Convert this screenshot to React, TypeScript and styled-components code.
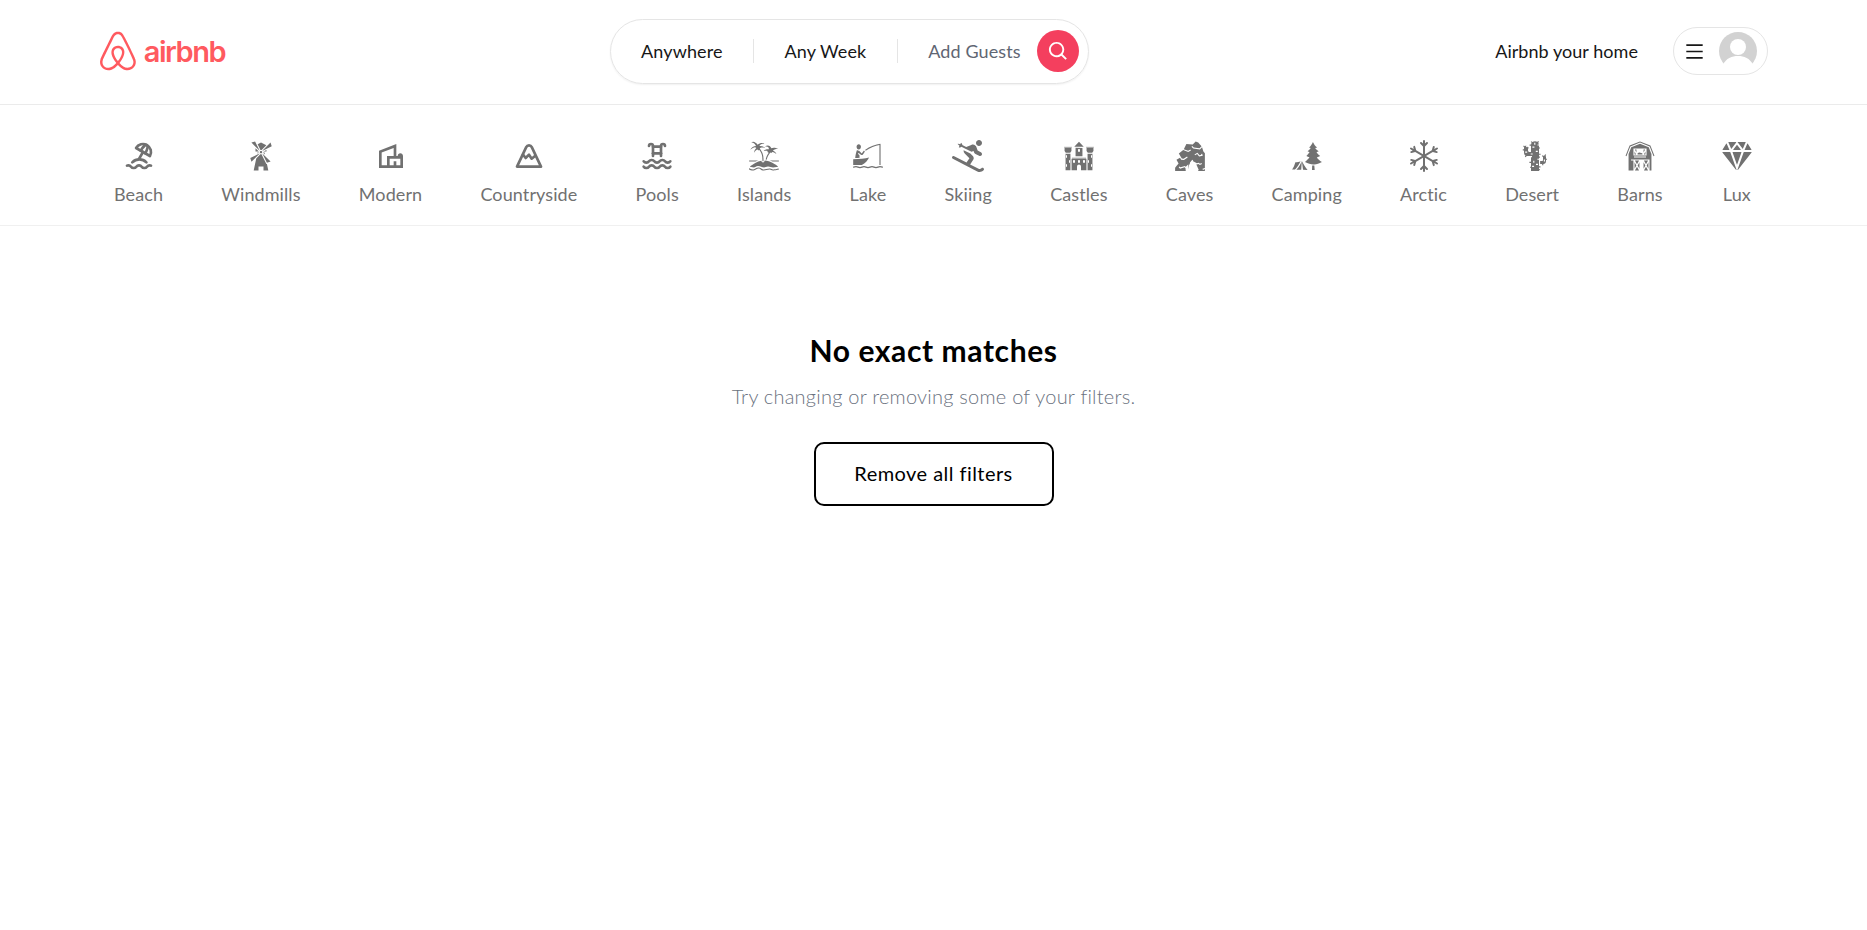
import styled, { createGlobalStyle } from 'styled-components';
import type { IconType } from 'react-icons';
import { AiOutlineMenu } from 'react-icons/ai';
import { BiSearch } from 'react-icons/bi';
import { BsSnow } from 'react-icons/bs';
import { FaAirbnb, FaSkiing } from 'react-icons/fa';
import {
  GiBarn,
  GiBoatFishing,
  GiCactus,
  GiCastle,
  GiCaveEntrance,
  GiForestCamp,
  GiIsland,
  GiWindmill,
} from 'react-icons/gi';
import { IoDiamond } from 'react-icons/io5';
import { MdOutlineVilla } from 'react-icons/md';
import { TbBeach, TbMountain, TbPool } from 'react-icons/tb';

const categories: { label: string; icon: IconType }[] = [
  { label: 'Beach', icon: TbBeach },
  { label: 'Windmills', icon: GiWindmill },
  { label: 'Modern', icon: MdOutlineVilla },
  { label: 'Countryside', icon: TbMountain },
  { label: 'Pools', icon: TbPool },
  { label: 'Islands', icon: GiIsland },
  { label: 'Lake', icon: GiBoatFishing },
  { label: 'Skiing', icon: FaSkiing },
  { label: 'Castles', icon: GiCastle },
  { label: 'Caves', icon: GiCaveEntrance },
  { label: 'Camping', icon: GiForestCamp },
  { label: 'Arctic', icon: BsSnow },
  { label: 'Desert', icon: GiCactus },
  { label: 'Barns', icon: GiBarn },
  { label: 'Lux', icon: IoDiamond },
];

export default function App() {
  return (
    <>
      <GlobalStyle />
      <Header>
        <Logo>
          <FaAirbnb size={44} />
          <LogoText>airbnb</LogoText>
        </Logo>
        <SearchBar>
          <SearchItem>Anywhere</SearchItem>
          <SearchDivider />
          <SearchItem>Any Week</SearchItem>
          <SearchDivider />
          <GuestsItem>Add Guests</GuestsItem>
          <SearchButton>
            <BiSearch size={23} />
          </SearchButton>
        </SearchBar>
        <UserArea>
          <HomeLink>Airbnb your home</HomeLink>
          <UserMenu>
            <AiOutlineMenu size={21} />
            <Avatar viewBox="0 0 38 38">
              <circle cx="19" cy="19" r="19" fill="#d2d2d2" />
              <circle cx="19" cy="15" r="8" fill="#fff" />
              <path d="M4 33c3-7 9-9 15-9s12 2 15 9a19 19 0 0 1-30 0z" fill="#fff" />
            </Avatar>
          </UserMenu>
        </UserArea>
      </Header>
      <CategoryBar>
        {categories.map(({ label, icon: Icon }) => (
          <Category key={label}>
            <Icon size={32} />
            <CategoryLabel>{label}</CategoryLabel>
          </Category>
        ))}
      </CategoryBar>
      <Main>
        <Title>No exact matches</Title>
        <Subtitle>Try changing or removing some of your filters.</Subtitle>
        <OutlineButton>Remove all filters</OutlineButton>
      </Main>
    </>
  );
}

const GlobalStyle = createGlobalStyle`
  html, body {
    margin: 0;
    background: #fff;
    font-family: 'Lato', 'Noto Sans', sans-serif;
  }
`;

const Header = styled.header`
  display: flex;
  align-items: center;
  justify-content: space-between;
  height: 102px;
  padding: 0 99px 2px 97px;
  border-bottom: 1px solid #ebebeb;
`;

const Logo = styled.div`
  display: flex;
  align-items: center;
  gap: 5px;
  width: 128px;
  color: #ff5a5f;
`;

const LogoText = styled.span`
  font-family: 'Inter', sans-serif;
  font-size: 29px;
  font-weight: 600;
  letter-spacing: -1.5px;
  line-height: 1;
`;

const SearchBar = styled.div`
  display: flex;
  align-items: center;
  box-sizing: border-box;
  width: 479px;
  height: 65px;
  padding: 0 9px 0 30px;
  border: 1px solid #e5e5e5;
  border-radius: 33px;
  box-shadow: 0 1px 2px rgba(0, 0, 0, 0.06);
`;

const SearchItem = styled.span`
  font-size: 18px;
  letter-spacing: 0.1px;
  color: #171717;
  white-space: nowrap;
`;

const GuestsItem = styled(SearchItem)`
  color: #5f6673;
`;

const SearchDivider = styled.span`
  width: 1px;
  height: 24px;
  margin: 0 30.5px;
  background: #e5e5e5;
`;

const SearchButton = styled.button`
  display: flex;
  align-items: center;
  justify-content: center;
  width: 42px;
  height: 42px;
  margin-left: auto;
  padding: 0;
  border: 0;
  border-radius: 50%;
  background: #f43f5e;
  color: #fff;
`;

const UserArea = styled.div`
  display: flex;
  align-items: center;
  gap: 35px;
  padding-left: 21px;
`;

const HomeLink = styled.span`
  font-size: 18px;
  letter-spacing: 0.05px;
  color: #171717;
`;

const UserMenu = styled.div`
  display: flex;
  align-items: center;
  justify-content: space-between;
  box-sizing: border-box;
  width: 95px;
  height: 48px;
  padding: 0 10px 0 10px;
  border: 1px solid #e5e5e5;
  border-radius: 24px;
  color: #171717;
`;

const Avatar = styled.svg`
  width: 38px;
  height: 38px;
`;

const CategoryBar = styled.nav`
  display: flex;
  align-items: flex-start;
  justify-content: space-between;
  height: 85px;
  padding: 35px 114px 0;
  border-bottom: 1px solid #f0f0f0;
`;

const Category = styled.div`
  display: flex;
  flex-direction: column;
  align-items: center;
  gap: 10px;
  color: #717171;
`;

const CategoryLabel = styled.span`
  font-size: 18px;
  line-height: 24px;
  letter-spacing: 0.1px;
`;

const Main = styled.main`
  display: flex;
  flex-direction: column;
  align-items: center;
  padding-top: 106px;
`;

const Title = styled.h1`
  margin: 0;
  font-size: 30px;
  line-height: 36px;
  font-weight: 700;
  letter-spacing: 0.6px;
  color: #000;
`;

const Subtitle = styled.p`
  margin: 14px 0 0;
  font-size: 20px;
  line-height: 28px;
  font-weight: 300;
  letter-spacing: 0.23px;
  color: #6b7280;
`;

const OutlineButton = styled.button`
  width: 240px;
  height: 64px;
  margin-top: 32px;
  padding-bottom: 3px;
  border: 2px solid #000;
  border-radius: 10px;
  background: #fff;
  font-family: inherit;
  font-size: 20px;
  letter-spacing: 0.45px;
  color: #000;
`;
